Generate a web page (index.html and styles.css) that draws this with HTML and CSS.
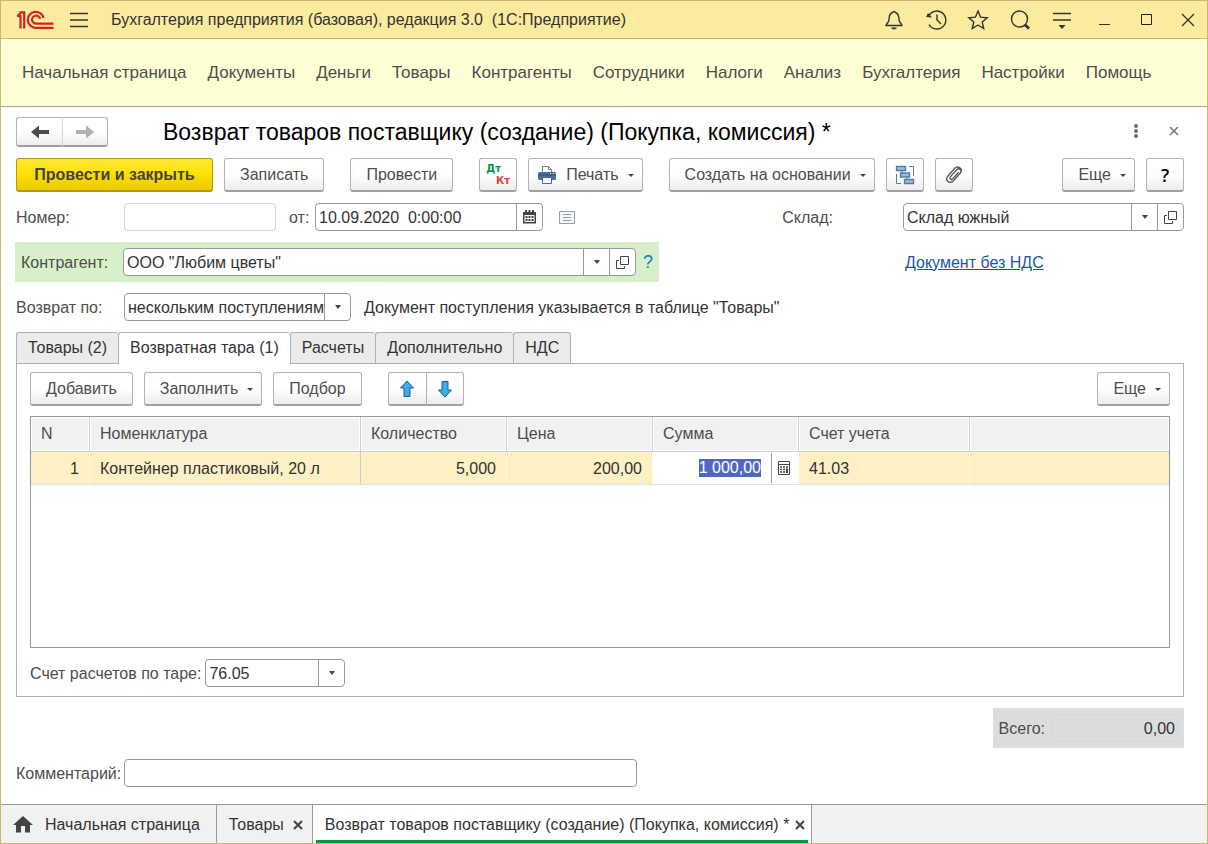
FILE: index.html
```html
<!DOCTYPE html>
<html lang="ru">
<head>
<meta charset="utf-8">
<title>Бухгалтерия предприятия</title>
<link rel="stylesheet" href="styles.css">
</head>
<body>
<div class="window">
  <header class="titlebar">
    <svg class="logo" width="38" height="20" viewBox="0 0 38 20" fill="none" stroke="#d8201e" stroke-width="2.200">
      <path d="M1 6H4.500V18.500M3.500 2.300H8.200V18.500M1.500 6l3-3"/>
      <path d="M27.600 8A8 8 0 1 0 20 17.800H37.500M24 9A4 4 0 1 0 20 13.700H37.500"/>
    </svg>
    <button class="icon-btn" aria-label="Меню">
      <svg width="20" height="16" viewBox="0 0 20 16" stroke="#333" stroke-width="1.300"><path d="M1 1.500h18M1 8h18M1 14.500h18"/></svg>
    </button>
    <span class="app-title">Бухгалтерия предприятия (базовая), редакция 3.0&nbsp; (1С:Предприятие)</span>
    <div class="window-tools">
      <button class="icon-btn" aria-label="Уведомления"><svg width="22" height="22" viewBox="0 0 22 22" fill="none" stroke="#333" stroke-width="1.400"><path d="M3 16.500h16c0-1.500-3-3-3-6C16 6 14.500 4 12.300 3.500 12 2 10 2 9.700 3.500 7.500 4 6 6 6 10.500c0 3-3 4.500-3 6z"/><path d="M8 18.500h6c-1 2.500-5 2.500-6 0z" fill="#333" stroke="none"/></svg></button>
      <button class="icon-btn" aria-label="История"><svg width="22" height="22" viewBox="0 0 22 22" fill="none" stroke="#333" stroke-width="1.400"><path d="M3.500 7.500A9 9 0 1 1 4 15.500M12 5.500V11l4 4"/><path d="M1 8l6 .5L3 4z" fill="#333" stroke="none"/></svg></button>
      <button class="icon-btn" aria-label="Избранное"><svg width="22" height="22" viewBox="0 0 22 22" fill="none" stroke="#333" stroke-width="1.400"><path d="M11 2l2.600 6.200 6.600.5-5 4.300 1.500 6.500L11 16l-5.700 3.500L6.800 13l-5-4.300 6.600-.5z"/></svg></button>
      <button class="icon-btn" aria-label="Поиск"><svg width="22" height="22" viewBox="0 0 22 22" fill="none" stroke="#333"><circle cx="10.500" cy="10" r="8" stroke-width="1.400"/><path d="M15.500 15.500l4.500 4" stroke-width="3"/></svg></button>
      <button class="icon-btn" aria-label="Сервис"><svg width="22" height="22" viewBox="0 0 22 22" stroke="#333" stroke-width="1.400"><path d="M2 4.500h18M2 11h18"/><path d="M7.500 16h7L11 20z" fill="#333" stroke="none"/></svg></button>
      <button class="icon-btn" aria-label="Свернуть"><svg width="22" height="22" viewBox="0 0 22 22" stroke="#333"><path d="M6 15.500h11"/></svg></button>
      <button class="icon-btn" aria-label="Развернуть"><svg width="22" height="22" viewBox="0 0 22 22" fill="none" stroke="#222"><path d="M6.500 5.500h10v10h-10z"/></svg></button>
      <button class="icon-btn" aria-label="Закрыть"><svg width="22" height="22" viewBox="0 0 22 22" stroke="#333" stroke-width="1.300"><path d="M5 5l12 12M17 5L5 17"/></svg></button>
    </div>
  </header>

  <nav class="sections">
    <a href="#">Начальная страница</a><a href="#">Документы</a><a href="#">Деньги</a><a href="#">Товары</a><a href="#">Контрагенты</a><a href="#">Сотрудники</a><a href="#">Налоги</a><a href="#">Анализ</a><a href="#">Бухгалтерия</a><a href="#">Настройки</a><a href="#">Помощь</a>
  </nav>

  <main class="form">
    <div class="form-head">
      <div class="btn-pair history">
        <button class="btn" aria-label="Назад"><svg width="18" height="14" viewBox="0 0 18 14" fill="#4d4d4d"><path d="M0 7l8-6.500V5h10v4H8v4.500z"/></svg></button>
        <button class="btn" aria-label="Вперед"><svg width="18" height="14" viewBox="0 0 18 14" fill="#b0b0b0"><path d="M18 7l-8-6.500V5H0v4h10v4.500z"/></svg></button>
      </div>
      <h1>Возврат товаров поставщику (создание) (Покупка, комиссия) *</h1>
      <div class="head-tools">
        <button class="icon-btn" aria-label="Еще действия"><svg width="6" height="16" viewBox="0 0 6 16" fill="#6a6a6a"><circle cx="3" cy="2" r="2"/><circle cx="3" cy="7" r="2"/><circle cx="3" cy="12" r="2"/></svg></button>
        <button class="icon-btn" aria-label="Закрыть форму"><svg width="10" height="10" viewBox="0 0 10 10" stroke="#777" stroke-width="1.600"><path d="M1 0l8 8M9 0L1 8"/></svg></button>
      </div>
    </div>

    <div class="toolbar">
      <button class="btn primary">Провести и закрыть</button>
      <button class="btn group-end">Записать</button>
      <button class="btn group-end">Провести</button>
      <button class="btn square" aria-label="Проводки"><span class="dtkt"><span class="dt">Дт</span><span class="kt">Кт</span></span></button>
      <button class="btn with-icon group-end">
        <svg width="20" height="20" viewBox="0 0 20 20"><path d="M5.500 8V1.500h6l3 3V8" fill="#fff" stroke="#6f8196"/><path d="M11.500 1.500v3h3" fill="none" stroke="#6f8196"/><rect x="1" y="7" width="18" height="8" rx="1.500" fill="#4a709c"/><path d="M1 10h18" stroke="#2d4d75"/><path d="M13 8.500h1M16 8.500h1" stroke="#fff"/><path d="M5.500 12.500h9v6h-9z" fill="#fff" stroke="#41699a"/></svg>
        Печать<span class="caret"></span></button>
      <button class="btn">Создать на основании<span class="caret"></span></button>
      <button class="btn square" aria-label="Структура подчиненности"><svg width="20" height="20" viewBox="0 0 20 20" fill="#9dbcd3" stroke="#4a80a8"><path d="M14 1.500h4.500V11M1.500 9v9.500H6M7 5.500v3M12 12.500v2" fill="none"/><path d="M1.500 1.500h9v4h-9zM5.500 8h9v4h-9zM9.500 14.500h9v4h-9z" stroke-width="1.300"/></svg></button>
      <button class="btn square" aria-label="Файлы"><svg width="20" height="20" viewBox="0 0 20 20" fill="none" stroke="#555" stroke-width="1.300" stroke-linecap="round"><path d="M14.500 7.500l-5.800 6.300c-1.700 1.700-3.800-.2-2.400-2L12.500 5c2.800-2.800 6 .2 3.800 3.200L9.500 15.700C5.500 19.500.8 15.500 3.600 11.500l6.900-8C13.500.5 17.500 2.500 17.500 6"/></svg></button>
      <button class="btn push">Еще<span class="caret"></span></button>
      <button class="btn square help">?</button>
    </div>

    <div class="row">
      <label class="lbl" for="num">Номер:</label>
      <div class="field disabled w-num"><input id="num" type="text"></div>
      <label class="lbl-inline" for="date">от:</label>
      <div class="field w-date"><input id="date" type="text" value="10.09.2020  0:00:00">
        <button class="field-btn" aria-label="Календарь"><svg width="13" height="14" viewBox="0 0 13 14" fill="#444"><path d="M0 2h2V0h2v2h1.500V0h2v2H9V0h2v2h2v11.500H0z"/><path d="M1.500 5h10v7h-10z" fill="#fff"/><path d="M2.500 6h2v2h-2zM5.500 6h2v2h-2zM8.500 6h2v2h-2zM2.500 9h2v2h-2zM5.500 9h2v2h-2zM8.500 9h2v2h-2z"/></svg></button>
      </div>
      <button class="icon-btn list-btn" aria-label="История номера"><svg width="16" height="13" viewBox="0 0 16 13" fill="#f6f9fc" stroke="#8ba0b8"><path d="M.5.500h15v12H.5zM4 3.500h8M4 6.500h8M4 9.500h8"/></svg></button>
      <div class="right-block store">
        <label for="store">Склад:</label>
        <div class="field w-store"><span class="combo"><select id="store"><option>Склад южный</option></select><span class="arrow"></span></span>
          <button class="field-btn" aria-label="Открыть склад"><svg width="13" height="13" viewBox="0 0 13 13" fill="none" stroke="#444"><path d="M4.500.500h8v8h-8zM3 4.500H.500v8h8V10"/></svg></button></div>
      </div>
    </div>

    <div class="row">
      <div class="accent">
        <label class="lbl" for="partner">Контрагент:</label>
        <div class="field w-partner"><span class="combo"><select id="partner"><option>ООО "Любим цветы"</option></select><span class="arrow"></span></span>
          <button class="field-btn" aria-label="Открыть контрагента"><svg width="13" height="13" viewBox="0 0 13 13" fill="none" stroke="#444"><path d="M4.500.500h8v8h-8zM3 4.500H.500v8h8V10"/></svg></button></div>
        <button class="icon-btn hint">?</button>
      </div>
      <div class="right-block vat"><a href="#">Документ без НДС</a></div>
    </div>

    <div class="row">
      <label class="lbl" for="by">Возврат по:</label>
      <div class="field w-by"><span class="combo"><select id="by"><option>нескольким поступлениям</option></select><span class="arrow"></span></span></div>
      <span class="note">Документ поступления указывается в таблице "Товары"</span>
    </div>

    <section class="pages">
      <div class="tabs" role="tablist">
        <button role="tab">Товары (2)</button><button role="tab" aria-selected="true">Возвратная тара (1)</button><button role="tab">Расчеты</button><button role="tab">Дополнительно</button><button role="tab">НДС</button>
      </div>
      <div class="panel">
        <div class="toolbar">
          <button class="btn">Добавить</button>
          <button class="btn">Заполнить<span class="caret"></span></button>
          <button class="btn group-end">Подбор</button>
          <div class="btn-pair">
            <button class="btn" aria-label="Вверх"><svg width="16" height="18" viewBox="0 0 16 18" fill="#3fa9ea" stroke="#17618f" stroke-linejoin="round"><path d="M8 1l6.500 7H11v8.500H5V8H1.500z"/></svg></button>
            <button class="btn" aria-label="Вниз"><svg width="16" height="18" viewBox="0 0 16 18" fill="#3fa9ea" stroke="#17618f" stroke-linejoin="round"><path d="M8 17l6.500-7H11V1.500H5V10H1.500z"/></svg></button>
          </div>
          <button class="btn push">Еще<span class="caret"></span></button>
        </div>
        <div class="grid">
          <table>
            <colgroup><col class="c-n"><col class="c-name"><col class="c-num"><col class="c-num"><col class="c-num"><col class="c-acc"><col></colgroup>
            <thead><tr><th>N</th><th>Номенклатура</th><th>Количество</th><th>Цена</th><th>Сумма</th><th>Счет учета</th><th></th></tr></thead>
            <tbody><tr><td class="num">1</td><td class="name">Контейнер пластиковый, 20 л</td><td class="num">5,000</td><td class="num">200,00</td>
              <td class="editing"><div class="cell-edit"><input id="sum" type="text" aria-label="Сумма" value="1 000,00"><button aria-label="Калькулятор"><svg width="12" height="14" viewBox="0 0 12 14" fill="none" stroke="#444"><path d="M.5.500h11v13H.5zM.5 3.500h11"/><path d="M2 6h2M5 6h2M8 6h2M2 8.500h2M5 8.500h2M2 11h2M5 11h2" stroke-width="1.500"/><path d="M9 7.500v4.500" stroke-width="2"/></svg></button></div></td>
              <td>41.03</td><td></td></tr></tbody>
          </table>
        </div>
        <div class="panel-foot">
          <label for="acc">Счет расчетов по таре:</label>
          <div class="field w-acc"><span class="combo"><select id="acc"><option>76.05</option></select><span class="arrow"></span></span></div>
        </div>
      </div>
    </section>

    <div class="total"><label for="total">Всего:</label><input id="total" type="text" value="0,00" readonly></div>

    <div class="row">
      <label class="lbl" for="comment">Комментарий:</label>
      <div class="field w-comment"><input id="comment" type="text"></div>
    </div>
  </main>

  <footer class="taskbar">
    <div class="task home"><svg width="20" height="17" viewBox="0 0 20 17" fill="#444"><path d="M10 0l10 9h-3v7.500h-5V10H8v6.500H3V9H0z"/></svg><a href="#">Начальная страница</a></div>
    <div class="task"><a href="#">Товары</a><button class="icon-btn" aria-label="Закрыть Товары"><svg width="10" height="10" viewBox="0 0 10 10" stroke="#444" stroke-width="2"><path d="M1 1l8 8M9 1L1 9"/></svg></button></div>
    <div class="task current"><a href="#">Возврат товаров поставщику (создание) (Покупка, комиссия) *</a><button class="icon-btn" aria-label="Закрыть Возврат"><svg width="10" height="10" viewBox="0 0 10 10" stroke="#444" stroke-width="2"><path d="M1 1l8 8M9 1L1 9"/></svg></button></div>
  </footer>
</div>
<script src="app.js"></script>
</body>
</html>
```

FILE: styles.css
```css
* { box-sizing: border-box; }
body {
  margin: 0;
  font-family: "Liberation Sans", Arial, sans-serif;
  font-size: 16px;
  line-height: 18px;
  color: #333;
  background: #fff;
}
button, input, select { font: inherit; color: inherit; margin: 0; padding: 0; border: 0; background: none; border-radius: 0; }
a { color: inherit; text-decoration: none; }
svg { display: block; flex: none; }
:focus { outline: none; }

.window { display: flex; flex-direction: column; min-height: 100vh; border: 1px solid #c8b96c; }
.icon-btn { display: flex; align-items: center; justify-content: center; }

/* Title bar */
.titlebar { display: flex; align-items: center; height: 38px; padding: 0 8px 0 15px; background: #fbeb9e; border-bottom: 1px solid #c8b96c; }
.logo { margin-right: 15px; }
.app-title { margin-left: 22px; }
.window-tools { display: flex; gap: 20px; margin-left: auto; }

.sections { display: flex; align-items: center; gap: 21px; height: 68px; padding: 0 21px; font-size: 17px; color: #4d4d4d; background: #ffffd5; border-bottom: 1px solid #a0a0a0; white-space: nowrap; }

/* Form */
.form { flex: 1; display: flex; flex-direction: column; gap: 11px; padding: 10px 23px 17px 15px; }
.form-head { display: flex; align-items: center; height: 30px; }
h1 { margin: 0 0 0 55px; font-size: 23px; line-height: 30px; font-weight: 400; color: #000; white-space: nowrap; }
.head-tools { display: flex; gap: 30px; margin-left: auto; padding-right: 5px; }

.toolbar { display: flex; gap: 11px; }
.btn { display: flex; align-items: center; justify-content: center; height: 34px; padding: 0 15px; color: #4d4d4d; white-space: nowrap; border: 1px solid #b3b3b3; border-bottom: 2px solid #a0a0a0; border-radius: 3px; background: linear-gradient(#fff 50%, #ececec); }
.btn.primary { min-width: 197px; font-weight: 700; color: #444; border-color: #b39b00; background: linear-gradient(#ffe838, #ffdf00 50%, #ebcb00); }
.group-end { margin-right: 15px; }
.btn.square { width: 38px; padding: 0; }
.push { margin-left: auto; }
.help { font: 600 18px/20px "Open Sans", sans-serif; color: #000; }
.btn.with-icon { padding-left: 8px; }
.with-icon svg { margin-right: 9px; }
.caret { width: 0; margin: 2px -7px 0 9px; border: 3px solid transparent; border-top: 3px solid #444; border-bottom: 0; }
.dtkt { display: grid; grid-template-columns: auto auto; font: 700 10px/12px "DejaVu Sans", sans-serif; }
.dt { grid-area: 1 / 1; color: #009646; margin-right: -5px; }
.kt { grid-area: 2 / 2; color: #e8403c; }
.btn-pair { display: flex; }
.btn-pair .btn { width: 39px; padding: 0; }
.btn-pair .btn:first-child { border-radius: 3px 0 0 3px; }
.btn-pair .btn:last-child { width: 38px; margin-left: -1px; border-radius: 0 3px 3px 0; }
.history .btn, .history .btn:last-child { width: 46px; height: 30px; }
.history .btn:last-child { border-left: 1px solid #d8d8d8; margin-left: 0; }
.history .btn:first-child { border-right: 0; }

.row { display: flex; align-items: center; min-height: 28px; }
label, .note { padding-top: 1px; }
label { color: #4d4d4d; white-space: nowrap; }
.lbl { width: 108px; }
.lbl-inline { width: 39px; padding-left: 13px; }
.field { display: flex; height: 28px; border: 1px solid #999; border-radius: 4px; background: #fff; }
.field.disabled { border-color: #d3d3d3; }
.field input { flex: 1; min-width: 0; width: 100%; padding: 1px 3px 0; white-space: pre; }
.field-btn { width: 26px; border-left: 1px solid #999; display: flex; align-items: center; justify-content: center; }
.combo { flex: 1; display: grid; grid-template-columns: 1fr 26px; }
.combo select { grid-area: 1 / 1 / 2 / 3; appearance: none; min-width: 0; padding: 1px 3px 0; }
.arrow { grid-area: 1 / 2; display: flex; align-items: center; justify-content: center; border-left: 1px solid #999; pointer-events: none; }
.arrow::after { content: ""; border: 3px solid transparent; border-top: 4px solid #444; border-bottom: 0; }
.w-num { width: 152px; }
.w-date { width: 228px; }
.w-store { width: 281px; }
.w-partner { width: 513px; }
.w-by { width: 227px; }
.w-acc { width: 140px; }
.w-comment { width: 513px; }
.list-btn { margin-left: 16px; }
.right-block { margin-left: auto; }
.store { display: flex; align-items: center; gap: 70px; }
.vat { width: 279px; padding-top: 1px; }
.vat a { color: #1a56b0; text-decoration: underline; }
.accent { display: flex; align-items: center; height: 40px; margin-left: -1px; padding: 0 6px; background: #d7f0c9; }
.accent .lbl { width: 102px; }
.hint { margin-left: 7px; font-size: 18px; color: #0f7cc4; }
.note { margin-left: 13px; }

/* Pages */
.pages { flex: 1; display: flex; flex-direction: column; }
.tabs { display: flex; }
.tabs button { height: 31px; padding: 0 11px; border: 1px solid #b0b0b0; border-width: 1px 0 0 1px; border-radius: 3px 3px 0 0; background: #ebebeb; white-space: nowrap; }
.tabs button:last-child { border-right-width: 1px; }
.tabs button[aria-selected] { height: 32px; margin-bottom: -1px; padding-bottom: 1px; background: #fff; z-index: 1; }
.panel { flex: 1; display: flex; flex-direction: column; padding: 8px 13px 9px; border: 1px solid #b0b0b0; }
.grid { flex: 1; margin: 10px 0 11px; border: 1px solid #999; }
table { width: 100%; table-layout: fixed; border-collapse: separate; border-spacing: 0; }
.c-n { width: 59px; }
.c-name { width: 271px; }
.c-num { width: 146px; }
.c-acc { width: 171px; }
th { height: 35px; padding: 0 10px; font-weight: 400; text-align: left; color: #4d4d4d; background: #f1f1f1; border-right: 1px solid #ccc; border-bottom: 1px solid #ccc; box-shadow: inset 0 0 0 1px #fff; }
th:last-child { border-right: 0; }
td { height: 33px; padding: 1px 10px 0; background: #fdf0c4; border-right: 1px solid #fff8e0; border-bottom: 1px solid #e0e0e6; }
td.name { border-right-color: #ccc; }
td:last-child { border-right: 0; }
.num { text-align: right; }
td.editing { padding: 0; background: #fff; border-right-color: #fff; }
.cell-edit { display: flex; height: 30px; }
.cell-edit input { flex: 1; min-width: 0; padding: 0 10px 0 0; text-align: right; }
.cell-edit input::selection { color: #fff; background: #5068c2; }
.cell-edit button { width: 27px; padding-left: 6px; border-left: 1px solid #999; }
.panel-foot { display: flex; align-items: center; gap: 4px; }

.total { align-self: flex-end; display: flex; align-items: center; gap: 6px; height: 40px; padding: 0 6px; background: #dcdcdc; }
.total input { width: 127px; height: 28px; padding: 1px 2px 0; text-align: right; border: 1px solid #d6d6d6; border-radius: 4px; }

/* Open windows */
.taskbar { display: flex; height: 39px; background: #f1f1f1; border-top: 1px solid #999; white-space: nowrap; }
.task { display: flex; align-items: center; gap: 9px; padding: 1px 9px 0 12px; border-right: 1px solid #999; }
.task.home { gap: 12px; padding-right: 16px; }
.task.current { gap: 6px; padding-right: 6px; background: linear-gradient(#009646, #009646) 3px 100% / calc(100% - 6px) 3px no-repeat #fff; }
```

FILE: app.js
```js
const sum = document.getElementById("sum");
sum.focus();
sum.select();
```
